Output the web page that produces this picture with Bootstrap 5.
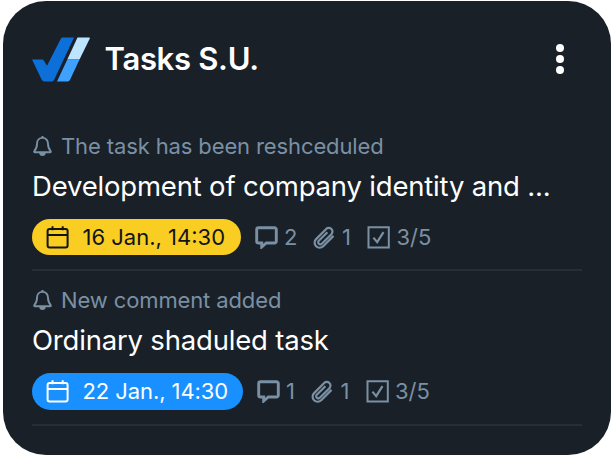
<!DOCTYPE html>
<html lang="en">
<head>
<meta charset="utf-8">
<meta name="viewport" content="width=device-width, initial-scale=1">
<title>Tasks S.U.</title>
<link href="https://cdn.jsdelivr.net/npm/bootstrap@5.3.0/dist/css/bootstrap.min.css" rel="stylesheet">
<style>
body{background:#fff;font-family:Inter,"Liberation Sans",sans-serif;overflow:hidden}
.task-widget{width:608px;height:453.5px;margin:1px 0 0 3px;padding:31px 29px 0;background:#192027;border-radius:43px;color:#fff}
.widget-head{height:54px}
.widget-title{font-size:31px;line-height:40px;font-weight:600;letter-spacing:-.3px;margin-left:13.500px}
.menu-btn{width:22px;height:40px;margin-right:11px}
.task-list{margin-top:47px}
.task-item{height:138.4px;margin-bottom:15.900px;border-bottom:2px solid #262e38}
.task-item svg,.widget-head svg{display:block;flex:none}
.task-note{height:26px;font-size:22px;line-height:25px;letter-spacing:-.12px;color:#7a90a5;gap:7px}
.task-name{height:34px;margin-top:10px;font-size:27.500px;line-height:35px;font-weight:400;letter-spacing:-.19px;white-space:nowrap}
.task-meta{height:36.5px;margin-top:15.800px;font-size:22px;line-height:35px;color:#7a90a5}
.date-pill{height:36.5px;padding-left:13.500px;font-size:22px;line-height:35px;font-weight:400;border-radius:19px}
.date-pill span{margin-left:14px;white-space:nowrap}
.date-later span{letter-spacing:-.08px}
.date-soon{width:208.500px;background:#facd22;color:#10151b}
.date-later{width:210.500px;background:#1890ff;color:#fff}
.meta-stat{gap:6.500px}
.stat-comments{width:58px;margin-left:14px}
.stat-files{width:54.500px}
.task-item:last-child .stat-comments{width:54.500px}
</style>
<script src="https://cdn.jsdelivr.net/npm/bootstrap@5.3.0/dist/js/bootstrap.bundle.min.js"></script>
</head>
<body>
<svg class="d-none" aria-hidden="true">
  <symbol id="bell" viewBox="0 0 22 22"><path d="M10.500 2.900c-3.500 0-5.500 2.600-5.500 5.900 0 4-.9 5.500-2.600 7.200-.5.600-.2 1.300.5 1.300h15.200c.7 0 1-.7.500-1.300-1.700-1.700-2.600-3.200-2.600-7.200 0-3.300-2-5.900-5.500-5.900Z" fill="none" stroke="currentColor" stroke-width="1.900"/><path d="M10.500 1v2" stroke="currentColor" stroke-width="2"/><path d="M7.300 18h6.400a3.200 3 0 0 1-6.400 0Z" fill="currentColor"/></symbol>
  <symbol id="calendar" viewBox="0 0 23 23"><rect x="1.600" y="3" width="20" height="18.400" rx="2" fill="none" stroke="currentColor" stroke-width="2"/><path d="M1 8.900h21M6.500.200v4M16.700.200v4" fill="none" stroke="currentColor" stroke-width="2"/></symbol>
  <symbol id="comment" viewBox="0 0 23 23"><path d="M3.500 1.700h16a1.800 1.800 0 0 1 1.800 1.800v11.700a1.800 1.800 0 0 1-1.800 1.800h-8.200l-4.600 4v-4H3.500a1.800 1.800 0 0 1-1.800-1.800V3.500a1.800 1.800 0 0 1 1.800-1.800Z" fill="none" stroke="currentColor" stroke-width="2.900"/></symbol>
  <symbol id="clip" viewBox="0 0 23 23"><path d="M20.300 9.400 10 19.700a5 5 0 0 1-7.100-7.100L13 2.500a3.650 3.650 0 0 1 5.200 5.200L8.600 17.300a2.100 2.100 0 0 1-3-3l8.600-8.600" fill="none" stroke="currentColor" stroke-width="2.200" transform="translate(.2 .5)"/></symbol>
  <symbol id="check" viewBox="0 0 23 23"><path d="M1.500 1.200h20.300v20.300H1.500Z" fill="none" stroke="currentColor" stroke-width="2"/><path d="m6.400 11.600 3.800 4.600 6.300-10" fill="none" stroke="currentColor" stroke-width="2.200"/></symbol>
</svg>
<main class="task-widget">
  <header class="widget-head d-flex align-items-center">
    <svg width="59" height="45" viewBox="0 0 59 45" aria-hidden="true">
      <path d="M0 22.500h10.300q1 0 1.500 1l3.200 5.200L28.800 1.800Q29.400.500 30.800.500H42L22.400 42.200Q21.500 44.500 20 44.500h-7.500q-1.800 0-2.800-1.800Z" fill="#0d6fd8"/>
      <path d="M45.500.500H57q1.200 0 .8 1L47.500 22.500H35.300Z" fill="#bde5ff"/>
      <path d="M35.300 22.500h12.200L38.200 42.500q-.9 2-2.500 2H25Z" fill="#3ea1fe"/>
    </svg>
    <h1 class="widget-title mb-0">Tasks S.U.</h1>
    <button class="menu-btn btn p-0 border-0 text-white ms-auto d-flex justify-content-center align-items-center" type="button" aria-label="Menu">
      <svg width="10" height="30" viewBox="0 0 10 30" fill="currentColor"><circle cx="5" cy="4" r="4"/><circle cx="5" cy="15" r="4"/><circle cx="5" cy="26" r="4"/></svg>
    </button>
  </header>
  <section class="task-list">
    <article class="task-item">
      <div class="task-note d-flex align-items-center"><svg width="22" height="22"><use href="#bell"/></svg><span>The task has been reshceduled</span></div>
      <h2 class="task-name mb-0">Development of company identity and ...</h2>
      <div class="task-meta d-flex align-items-center">
        <div class="date-pill date-soon d-flex align-items-center"><svg width="23" height="23"><use href="#calendar"/></svg><span>16 Jan., 14:30</span></div>
        <div class="meta-stat stat-comments d-flex align-items-center"><svg width="23" height="23"><use href="#comment"/></svg><span>2</span></div>
        <div class="meta-stat stat-files d-flex align-items-center"><svg width="23" height="23"><use href="#clip"/></svg><span>1</span></div>
        <div class="meta-stat d-flex align-items-center"><svg width="23" height="23"><use href="#check"/></svg><span>3/5</span></div>
      </div>
    </article>
    <article class="task-item">
      <div class="task-note d-flex align-items-center"><svg width="22" height="22"><use href="#bell"/></svg><span>New comment added</span></div>
      <h2 class="task-name mb-0">Ordinary shaduled task</h2>
      <div class="task-meta d-flex align-items-center">
        <div class="date-pill date-later d-flex align-items-center"><svg width="23" height="23"><use href="#calendar"/></svg><span>22 Jan., 14:30</span></div>
        <div class="meta-stat stat-comments d-flex align-items-center"><svg width="23" height="23"><use href="#comment"/></svg><span>1</span></div>
        <div class="meta-stat stat-files d-flex align-items-center"><svg width="23" height="23"><use href="#clip"/></svg><span>1</span></div>
        <div class="meta-stat d-flex align-items-center"><svg width="23" height="23"><use href="#check"/></svg><span>3/5</span></div>
      </div>
    </article>
  </section>
</main>
</body>
</html>
